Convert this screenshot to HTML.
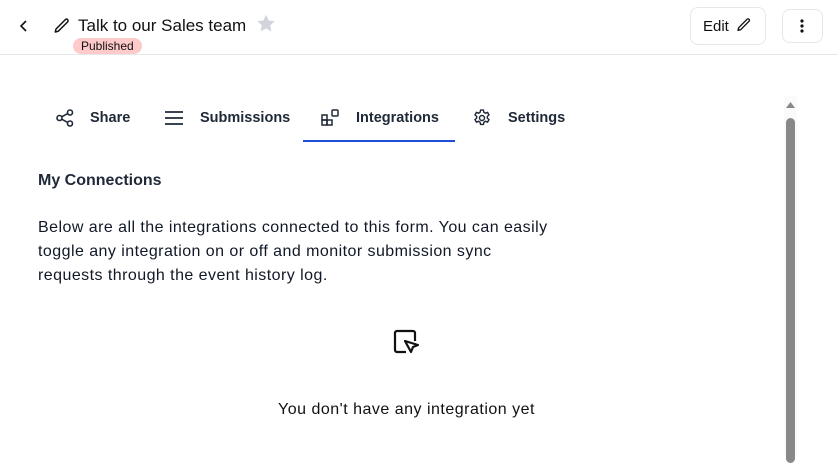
<!DOCTYPE html>
<html><head><meta charset="utf-8"><style>
*{box-sizing:border-box;margin:0;padding:0}
body{width:838px;height:456px;overflow:hidden;background:#fff;font-family:"Liberation Sans",sans-serif;color:#111827;position:relative}
.abs{position:absolute}
.hdr{left:0;top:0;width:838px;height:55px;border-bottom:1px solid #e5e7eb}
.btn{border:1px solid #e5e7eb;border-radius:8px;background:#fff}
.tab{position:absolute;top:110px;font-size:14.5px;font-weight:bold;color:#1f2937}
p{font-size:16px;line-height:24px;color:#111827;letter-spacing:0.45px}
</style></head><body>
<div class="abs hdr"></div>
<svg class="abs" style="left:18px;top:19px" width="12" height="14" viewBox="0 0 12 14"><path d="M8 2L3 7l5 5" fill="none" stroke="#111" stroke-width="1.6"/></svg>
<svg class="abs" style="left:53px;top:17px" width="18" height="18" viewBox="0 0 24 24"><path d="M16.5 3.5a2.1 2.1 0 013 3L7 19l-4 1 1-4z" fill="none" stroke="#111" stroke-width="2" stroke-linejoin="round"/></svg>
<div class="abs" style="left:78px;top:16px;font-size:17px;color:#111">Talk to our Sales team</div>
<svg class="abs" style="left:255px;top:13px" width="22" height="21" viewBox="0 0 24 24"><path d="M12 2l3 6.5 7 .8-5.2 4.8 1.4 7L12 17.6 5.8 21l1.4-7L2 9.3l7-.8z" fill="#d1d5db"/></svg>
<div class="abs" style="left:73px;top:38px;height:16px;padding:0 8px;background:#fecaca;border-radius:8px;font-size:12px;line-height:16px;color:#111">Published</div>
<div class="abs btn" style="left:690px;top:7px;width:76px;height:38px"></div>
<div class="abs" style="left:703px;top:18px;font-size:15px;color:#111">Edit</div>
<svg class="abs" style="left:736px;top:17px" width="16" height="16" viewBox="0 0 24 24"><path d="M16.5 3.5a2.1 2.1 0 013 3L7 19l-4 1 1-4z" fill="none" stroke="#111" stroke-width="2" stroke-linejoin="round"/></svg>
<div class="abs btn" style="left:782px;top:9px;width:41px;height:34px"></div>
<svg class="abs" style="left:799px;top:18px" width="6" height="16"><circle cx="3" cy="3" r="1.6" fill="#111"/><circle cx="3" cy="8" r="1.6" fill="#111"/><circle cx="3" cy="13" r="1.6" fill="#111"/></svg>

<svg class="abs" style="left:55px;top:108px" width="20" height="20" viewBox="0 0 20 20" fill="none" stroke="#1f2937" stroke-width="1.6"><circle cx="4.5" cy="10" r="2.5"/><circle cx="15" cy="4.5" r="2.5"/><circle cx="15" cy="15.5" r="2.5"/><path d="M6.7 8.8l6-3.2M6.7 11.2l6 3.2"/></svg>
<div class="tab" style="left:90px">Share</div>
<svg class="abs" style="left:164px;top:110px" width="20" height="16" viewBox="0 0 20 16" stroke="#1f2937" stroke-width="1.8"><path d="M1 2h18M1 8h18M1 14h18"/></svg>
<div class="tab" style="left:200px">Submissions</div>
<svg class="abs" style="left:320px;top:108px" width="20" height="20" viewBox="0 0 20 20" fill="none" stroke="#1f2937" stroke-width="1.5"><rect x="2" y="7" width="5" height="5"/><rect x="2" y="12" width="5" height="5"/><rect x="7" y="12" width="5" height="5"/><rect x="12" y="2" width="6" height="6" rx="1"/></svg>
<div class="tab" style="left:356px">Integrations</div>
<div class="abs" style="left:303px;top:140px;width:152px;height:2px;background:#1d4ed8"></div>
<svg class="abs" style="left:472px;top:108px" width="20" height="20" viewBox="0 0 24 24" fill="none" stroke="#1f2937" stroke-width="1.7"><path d="M10.3 2.5h3.4l.6 2.7 1.8 1 2.6-.9 1.7 2.9-2 1.9v2l2 1.9-1.7 2.9-2.6-.9-1.8 1-.6 2.7h-3.4l-.6-2.7-1.8-1-2.6.9-1.7-2.9 2-1.9v-2l-2-1.9 1.7-2.9 2.6.9 1.8-1z"/><circle cx="12" cy="12" r="3"/></svg>
<div class="tab" style="left:508px">Settings</div>

<div class="abs" style="left:38px;top:172px;font-size:16px;font-weight:bold;color:#1f2937">My Connections</div>
<p class="abs" style="left:38px;top:216px;width:560px">Below are all the integrations connected to this form. You can easily<br>toggle any integration on or off and monitor submission sync<br>requests through the event history log.</p>

<svg class="abs" style="left:393px;top:329px" width="28" height="28" viewBox="0 0 28 28" fill="none" stroke="#111" stroke-width="2.2" stroke-linejoin="round"><path d="M13 23H4a2 2 0 01-2-2V4a2 2 0 012-2h16a2 2 0 012 2v8"/><path d="M12 12l13 4-5 2-2 5z"/></svg>
<div class="abs" style="left:278px;top:401px;font-size:16px;color:#111;letter-spacing:0.5px">You don't have any integration yet</div>

<div class="abs" style="left:784px;top:96px;width:13px;height:360px;background:#fafafa"></div>
<svg class="abs" style="left:786px;top:102px" width="9" height="6"><path d="M0 6L4.5 0 9 6z" fill="#888"/></svg>
<div class="abs" style="left:786px;top:118px;width:9px;height:345px;background:#888;border-radius:5px"></div>
</body></html>
